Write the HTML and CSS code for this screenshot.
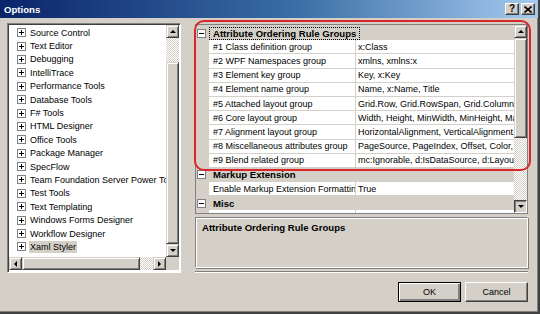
FILE: index.html
```html
<!DOCTYPE html>
<html lang="en">
  <head>
    <meta charset="UTF-8" />
    <title>Options</title>
    <link rel="stylesheet" href="styles.css">
  </head>
  <body>
    <div class="window">
      <div class="titlebar">
        <span class="title">Options</span>
        <div class="caption-buttons">
          <span class="cap-btn help">?</span>
          <span class="cap-btn close">
            <svg width="8" height="7" viewBox="0 0 8 7"><path d="M0.5 0.5 L7.5 6.5 M7.5 0.5 L0.5 6.5" stroke="#000" stroke-width="1.6"/></svg>
          </span>
        </div>
      </div>

      <div class="client">
        <div class="tree-panel">
          <div class="tree-top">
            <ul class="tree">
              <li><span class="plus"></span><span class="label">Source Control</span></li>
              <li><span class="plus"></span><span class="label">Text Editor</span></li>
              <li><span class="plus"></span><span class="label">Debugging</span></li>
              <li><span class="plus"></span><span class="label">IntelliTrace</span></li>
              <li><span class="plus"></span><span class="label">Performance Tools</span></li>
              <li><span class="plus"></span><span class="label">Database Tools</span></li>
              <li><span class="plus"></span><span class="label">F# Tools</span></li>
              <li><span class="plus"></span><span class="label">HTML Designer</span></li>
              <li><span class="plus"></span><span class="label">Office Tools</span></li>
              <li><span class="plus"></span><span class="label">Package Manager</span></li>
              <li><span class="plus"></span><span class="label">SpecFlow</span></li>
              <li><span class="plus"></span><span class="label">Team Foundation Server Power Tools</span></li>
              <li><span class="plus"></span><span class="label">Test Tools</span></li>
              <li><span class="plus"></span><span class="label">Text Templating</span></li>
              <li><span class="plus"></span><span class="label">Windows Forms Designer</span></li>
              <li><span class="plus"></span><span class="label">Workflow Designer</span></li>
              <li class="selected"><span class="plus"></span><span class="label">Xaml Styler</span></li>
            </ul>
            <div class="vscroll tree-vscroll">
              <span class="sb-btn"><i class="arrow up"></i></span>
              <span class="sb-track"></span>
              <span class="sb-thumb"></span>
              <span class="sb-btn"><i class="arrow down"></i></span>
            </div>
          </div>
          <div class="hscroll">
            <span class="sb-btn"><i class="arrow left"></i></span>
            <span class="sb-thumb"></span>
            <span class="sb-track"></span>
            <span class="sb-btn"><i class="arrow right"></i></span>
            <span class="sb-corner"></span>
          </div>
        </div>

        <div class="right-column">
          <div class="prop-grid">
            <div class="prop-rows">
              <div class="category"><span class="minus"></span><span class="cat-label focused">Attribute Ordering Rule Groups</span></div>
              <div class="prop"><span class="gutter"></span><span class="name">#1 Class definition group</span><span class="value">x:Class</span></div>
              <div class="prop"><span class="gutter"></span><span class="name">#2 WPF Namespaces group</span><span class="value">xmlns, xmlns:x</span></div>
              <div class="prop"><span class="gutter"></span><span class="name">#3 Element key group</span><span class="value">Key, x:Key</span></div>
              <div class="prop"><span class="gutter"></span><span class="name">#4 Element name group</span><span class="value">Name, x:Name, Title</span></div>
              <div class="prop"><span class="gutter"></span><span class="name">#5 Attached layout group</span><span class="value">Grid.Row, Grid.RowSpan, Grid.Column, Grid.ColumnSpan, Canvas.Left</span></div>
              <div class="prop"><span class="gutter"></span><span class="name">#6 Core layout group</span><span class="value">Width, Height, MinWidth, MinHeight, MaxWidth, MaxHeight</span></div>
              <div class="prop"><span class="gutter"></span><span class="name">#7 Alignment layout group</span><span class="value">HorizontalAlignment, VerticalAlignment, HorizontalContentAlignment</span></div>
              <div class="prop"><span class="gutter"></span><span class="name">#8 Miscellaneous attributes group</span><span class="value">PageSource, PageIndex, Offset, Color, TargetName</span></div>
              <div class="prop"><span class="gutter"></span><span class="name">#9 Blend related group</span><span class="value">mc:Ignorable, d:IsDataSource, d:LayoutOverrides</span></div>
              <div class="category"><span class="minus"></span><span class="cat-label">Markup Extension</span></div>
              <div class="prop"><span class="gutter"></span><span class="name">Enable Markup Extension Formatting</span><span class="value">True</span></div>
              <div class="category"><span class="minus"></span><span class="cat-label">Misc</span></div>
              <div class="prop"><span class="gutter"></span><span class="name"></span><span class="value"></span></div>
            </div>
            <div class="vscroll grid-vscroll">
              <span class="sb-btn"><i class="arrow up"></i></span>
              <span class="sb-thumb"></span>
              <span class="sb-track"></span>
              <span class="sb-btn pressed"><i class="arrow down"></i></span>
            </div>
          </div>

          <div class="description">
            <div class="desc-title">Attribute Ordering Rule Groups</div>
          </div>

          <div class="separator"></div>

          <div class="buttons">
            <button class="btn default">OK</button>
            <button class="btn">Cancel</button>
          </div>
        </div>
      </div>

      <div class="annotation"></div>
    </div>
  </body>
</html>
```

FILE: styles.css
```css
:root {
  --face: #d4d0c8;
  --shadow: #808080;
  --dark: #404040;
  --light: #ffffff;
  --grid-line: #d4d0c8;
  --mark: #d8262a;
}

* {
  box-sizing: border-box;
  margin: 0;
  padding: 0;
}

body {
  width: 540px;
  height: 314px;
  overflow: hidden;
  font-family: "Liberation Sans", Arial, sans-serif;
  font-size: 9px;
  color: #000;
  background: var(--face);
}

.window {
  position: relative;
  width: 540px;
  height: 314px;
  background: var(--face);
  border-right: 2px solid var(--dark);
  border-bottom: 2px solid var(--dark);
  box-shadow: inset -1px -1px var(--shadow);
}

/* Title bar */
.titlebar {
  height: 18px;
  display: flex;
  align-items: center;
  justify-content: space-between;
  padding: 0 3px 0 4px;
  background: linear-gradient(to right, #0a246a, #3a6ea5 55%, #a6caf0);
}

.title {
  color: #fff;
  font-weight: bold;
  font-size: 9.6px;
}

.caption-buttons {
  display: flex;
  gap: 2px;
}

.cap-btn {
  width: 14px;
  height: 12px;
  display: flex;
  align-items: center;
  justify-content: center;
  background: var(--face);
  border: 1px solid;
  border-color: var(--light) var(--dark) var(--dark) var(--light);
  box-shadow: inset -1px -1px var(--shadow);
  font-weight: bold;
  font-size: 10px;
  line-height: 1;
}

/* Client area */
.client {
  display: flex;
  align-items: flex-start;
  gap: 14px;
  padding: 5px 0 0 7px;
}

.tree-panel {
  width: 174px;
  height: 250px;
  background: #fff;
  border: 1px solid;
  border-color: var(--shadow) var(--light) var(--light) var(--shadow);
  box-shadow: inset 1px 1px var(--dark);
  padding: 1px 1px 0 1px;
  display: flex;
  flex-direction: column;
}

.tree-top {
  display: flex;
  height: 232px;
}

.tree {
  list-style: none;
  flex: 1;
  overflow: hidden;
  padding-top: 1px;
}

.tree li {
  height: 13.4px;
  display: flex;
  align-items: center;
  white-space: nowrap;
  padding-left: 8px;
}

.plus,
.minus {
  position: relative;
  flex: none;
  width: 9px;
  height: 9px;
  border: 1px solid var(--shadow);
  background: #fff;
}

.plus::before,
.minus::before {
  content: "";
  position: absolute;
  left: 1px;
  top: 3px;
  width: 5px;
  height: 1px;
  background: #000;
}

.plus::after {
  content: "";
  position: absolute;
  left: 3px;
  top: 1px;
  width: 1px;
  height: 5px;
  background: #000;
}

.tree .label {
  margin-left: 3px;
  padding: 0 1px;
  line-height: 12px;
}

.tree .selected .label {
  background: var(--face);
}

/* Scrollbars */
.vscroll {
  width: 13px;
  flex: none;
  display: flex;
  flex-direction: column;
}

.hscroll {
  height: 13px;
  display: flex;
}

.sb-btn {
  flex: none;
  width: 13px;
  height: 13px;
  display: flex;
  align-items: center;
  justify-content: center;
  background: var(--face);
  border: 1px solid;
  border-color: var(--face) var(--dark) var(--dark) var(--face);
  box-shadow: inset 1px 1px var(--light), inset -1px -1px var(--shadow);
}

.sb-btn.pressed {
  border-color: var(--dark) var(--light) var(--light) var(--dark);
  box-shadow: inset 1px 1px var(--shadow);
}

.sb-thumb {
  background: var(--face);
  border: 1px solid;
  border-color: var(--face) var(--dark) var(--dark) var(--face);
  box-shadow: inset 1px 1px var(--light), inset -1px -1px var(--shadow);
}

.sb-track {
  background: repeating-conic-gradient(#fff 0 25%, var(--face) 0 50%) 0 0 / 2px 2px;
}

.sb-corner {
  width: 13px;
  background: var(--face);
}

.tree-vscroll .sb-track { height: 24px; }
.tree-vscroll .sb-thumb { flex: 1; }
.hscroll .sb-thumb { width: 118px; }
.hscroll .sb-track { width: 13px; }

.arrow {
  width: 1px;
  height: 0;
  border: 3px solid transparent;
}

.arrow.up { border-bottom-color: #000; border-top-width: 0; margin-top: -1px; }
.arrow.down { border-top-color: #000; border-bottom-width: 0; }
.arrow.left { border-right-color: #000; border-left-width: 0; width: 0; height: 1px; }
.arrow.right { border-left-color: #000; border-right-width: 0; width: 0; height: 1px; }

/* Right side */
.right-column {
  width: 333px;
  display: flex;
  flex-direction: column;
}

.prop-grid {
  height: 190px;
  margin-top: 1px;
  display: flex;
  background: var(--face);
  border: 1px solid var(--shadow);
}

.prop-rows {
  flex: 1;
  overflow: hidden;
  padding-top: 1px;
}

.category,
.prop {
  height: 14.2px;
  display: flex;
  align-items: center;
  white-space: nowrap;
}

.category {
  font-weight: bold;
  font-size: 9.6px;
}

.category .minus {
  margin-left: 1px;
}

.cat-label {
  margin-left: 4px;
  padding: 0 3px;
  line-height: 11px;
}

.cat-label.focused {
  outline: 1px dotted #000;
  outline-offset: 0;
}

.prop .gutter {
  width: 13px;
  flex: none;
  align-self: stretch;
}

.prop .name,
.prop .value {
  align-self: stretch;
  display: flex;
  align-items: center;
  background: #fff;
  border-bottom: 1px solid var(--grid-line);
  overflow: hidden;
}

.prop .name {
  width: 147px;
  flex: none;
  padding-left: 4px;
  border-right: 1px solid var(--grid-line);
}

.prop .value {
  flex: 1;
  padding-left: 2px;
}

.grid-vscroll .sb-thumb { height: 100px; }
.grid-vscroll .sb-track { flex: 1; }

.description {
  height: 51px;
  margin-top: 3px;
  border: 1px solid;
  border-color: var(--shadow) var(--light) var(--light) var(--shadow);
  box-shadow: inset 1px 1px var(--light), 1px 1px var(--shadow);
  padding: 4px 6px;
}

.desc-title {
  font-weight: bold;
  font-size: 9.6px;
}

.separator {
  margin-top: 3px;
  height: 2px;
  border-top: 1px solid var(--shadow);
  border-bottom: 1px solid var(--light);
}

.buttons {
  display: flex;
  justify-content: flex-end;
  gap: 4px;
  margin-top: 9px;
}

.btn {
  width: 63px;
  height: 20px;
  font-family: inherit;
  font-size: 9px;
  color: #000;
  background: var(--face);
  border: 1px solid;
  border-color: var(--light) var(--dark) var(--dark) var(--light);
  box-shadow: inset -1px -1px var(--shadow);
}

.btn.default {
  border: 1px solid #000;
  box-shadow: inset 1px 1px var(--light), inset -2px -2px var(--shadow);
}

/* red hand-drawn highlight over the rule groups */
.annotation {
  position: absolute;
  left: 194px;
  top: 20px;
  width: 337px;
  height: 151px;
  border: 2px solid var(--mark);
  border-radius: 10px;
  pointer-events: none;
}
```
